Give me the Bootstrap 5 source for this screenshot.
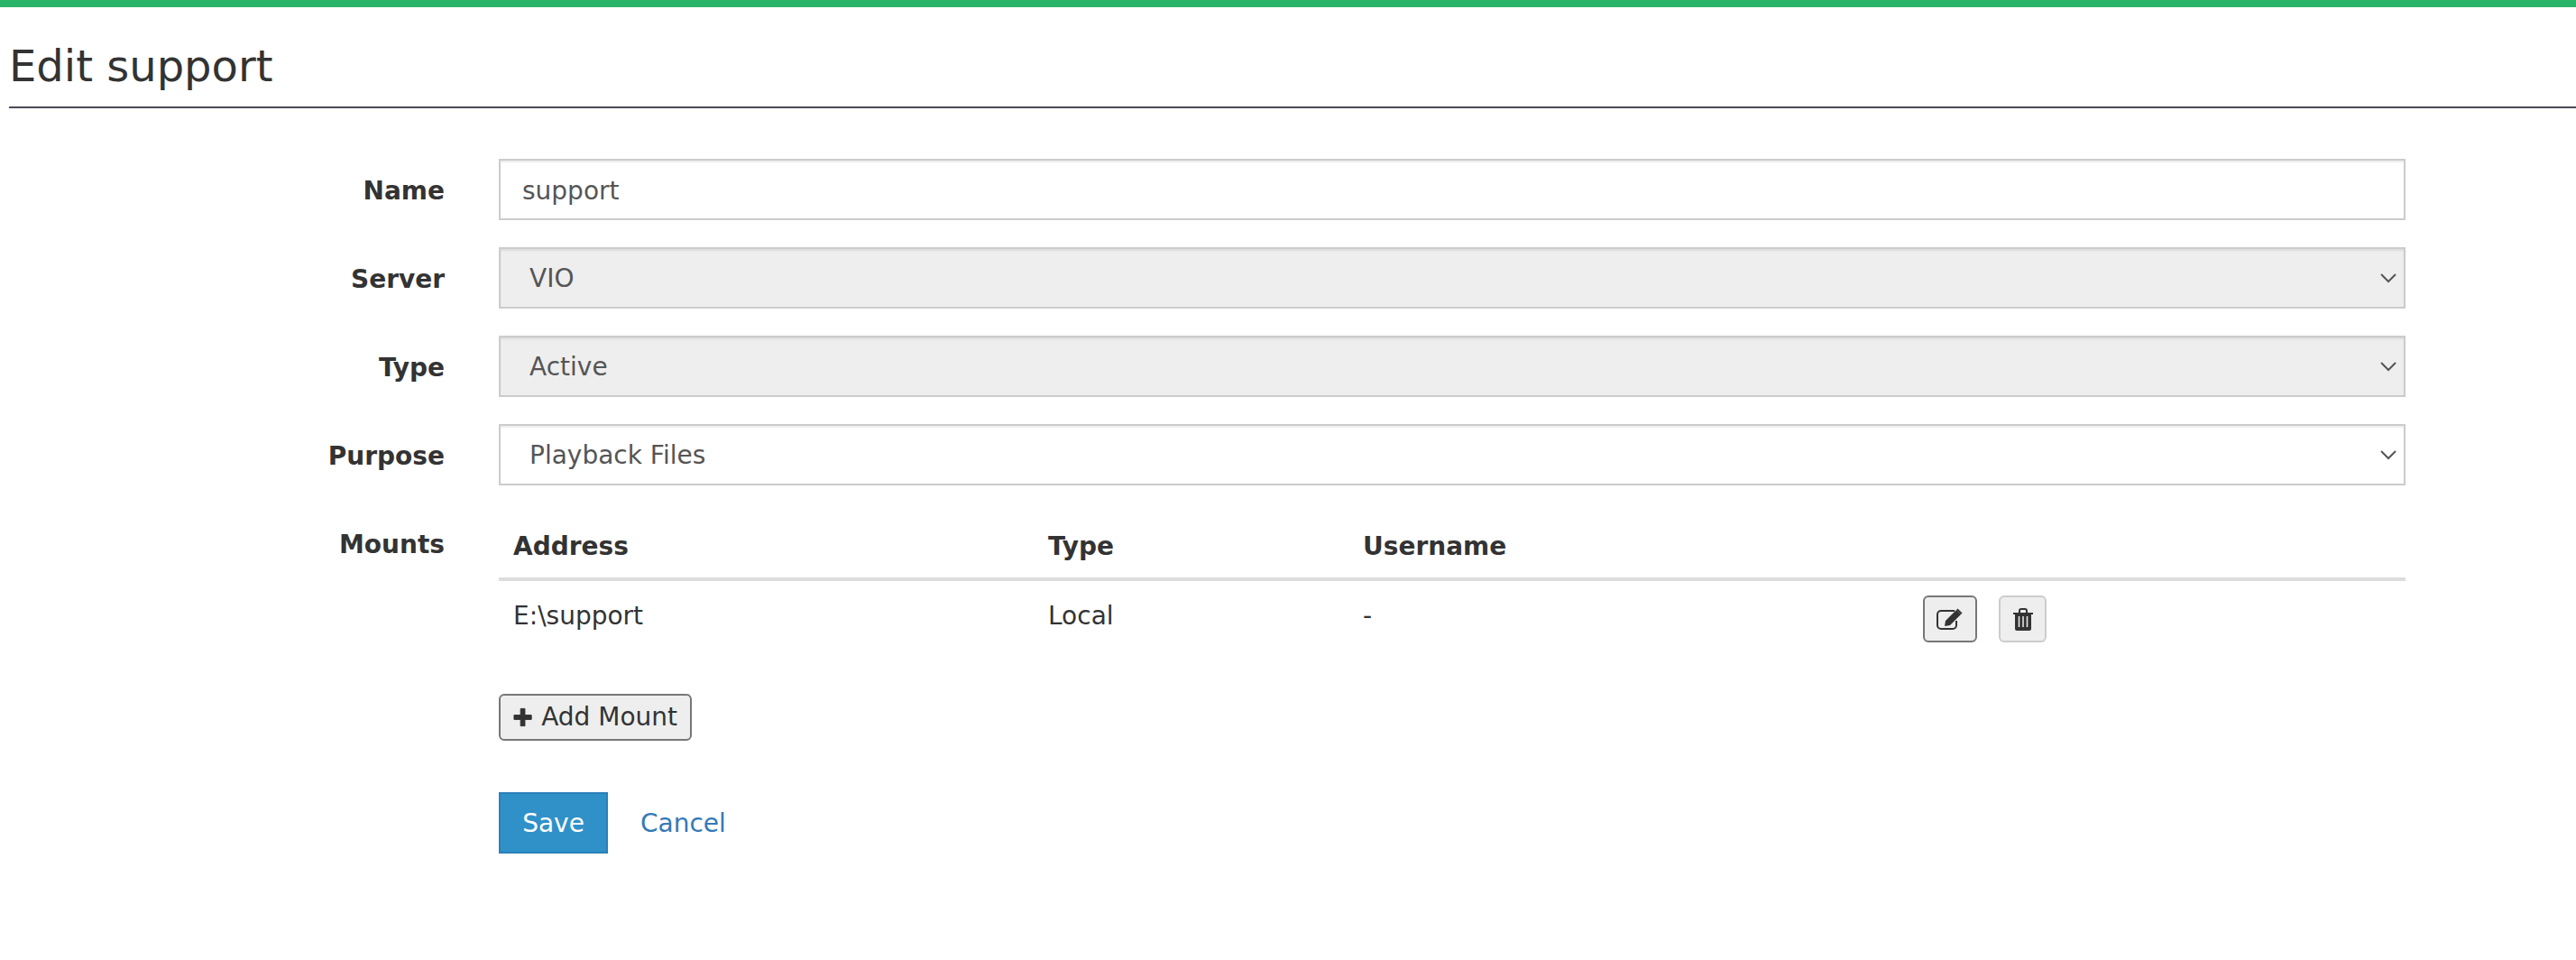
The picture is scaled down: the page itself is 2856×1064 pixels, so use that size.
<!DOCTYPE html>
<html lang="en">
<head>
<meta charset="utf-8">
<title>Edit support</title>
<link rel="stylesheet" href="https://cdn.jsdelivr.net/npm/bootstrap@5.3.0/dist/css/bootstrap.min.css">
<style>
html,body{height:100%}
body{font-family:"DejaVu Sans",Verdana,sans-serif;font-size:28px;line-height:40px;color:#333;background:#fff}
.topbar{height:8px;background:#2ab469}
.page-title{margin:0 0 0 10px;padding:32px 0 0;font-size:48px;line-height:66px;font-weight:400;color:#333;border-bottom:2px solid #4a4a58;height:112px}
.edit-form{padding-top:56px}
.form-line{display:flex;margin-bottom:30px}
.label-col{width:493px;flex:none;text-align:right;font-weight:700;font-size:28px;padding-top:16px;line-height:40px}
.field-col{width:2114px;margin-left:60px;flex:none}
.field{height:68px;border:2px solid #ccc;border-radius:0;box-shadow:inset 0 2px 2px rgba(0,0,0,.075);font-size:28px;color:#555;padding:2px 24px 0;background-color:#fff}
select.field{padding:2px 24px 0 32px;background-position:right 7px center;background-size:20px 12px;background-image:url("data:image/svg+xml,%3csvg xmlns='http://www.w3.org/2000/svg' viewBox='0 0 20 12'%3e%3cpath fill='none' stroke='%23555' stroke-width='2' d='M2 2l8 8 8-8'/%3e%3c/svg%3e")}
.field:disabled{background-color:#eee;color:#555;opacity:1}
.mounts{margin:0 0 41px;--bs-table-bg:transparent}
.mounts th{font-size:28px;font-weight:700;color:#333;padding:18px 16px 14px;line-height:40px;border-bottom:4px solid #ddd}
.mounts td{font-size:28px;color:#333;padding:19px 16px 13px;line-height:40px;border:0}
.mounts td.act-cell{padding:16px}
.act{display:inline-flex;align-items:center;justify-content:center;height:52px;padding:0;border:2px solid #ccc;border-radius:6px;background:#eee;color:#333;vertical-align:top}
.act-edit{width:60px;border-color:#777;margin-right:24px}
.act-del{width:53px}
.add-btn{height:52px;width:214px;padding:0 14px;border:2px solid #777;border-radius:6px;background:#eee;color:#333;font-size:28px;line-height:40px;display:inline-flex;align-items:center;gap:10px;white-space:nowrap}
.save-btn{height:68px;width:121px;border:2px solid #2a80b9;border-radius:0;background:#3091c9;color:#fff;font-size:28px;padding:2px 0 0}
.cancel-link{color:#337ab7;text-decoration:none;margin-left:36px;font-size:28px;padding-top:2px}
.actions{margin-top:57px}
</style>
</head>
<body>
<div class="topbar"></div>
<h2 class="page-title">Edit support</h2>
<form class="edit-form">
  <div class="form-line"><label class="label-col">Name</label><div class="field-col"><input class="form-control field" value="support"></div></div>
  <div class="form-line"><label class="label-col">Server</label><div class="field-col"><select class="form-select field" disabled><option>VIO</option></select></div></div>
  <div class="form-line"><label class="label-col">Type</label><div class="field-col"><select class="form-select field" disabled><option>Active</option></select></div></div>
  <div class="form-line"><label class="label-col">Purpose</label><div class="field-col"><select class="form-select field"><option>Playback Files</option></select></div></div>
  <div class="form-line mb-0"><label class="label-col">Mounts</label>
    <div class="field-col">
      <table class="table mounts">
        <colgroup><col style="width:593px"><col style="width:349px"><col style="width:621px"><col></colgroup>
        <thead><tr><th>Address</th><th>Type</th><th>Username</th><th></th></tr></thead>
        <tbody><tr><td>E:\support</td><td>Local</td><td>-</td><td class="act-cell">
          <button type="button" class="btn act act-edit" aria-label="Edit"><svg width="30" height="24" viewBox="0 0 30 24"><path d="M22 14v5a4 4 0 0 1-4 4H5a4 4 0 0 1-4-4V7a4 4 0 0 1 4-4h15" fill="none" stroke="#333" stroke-width="2"/><path d="M10 14 22 2l5 5-12 12-6 1z" fill="#333"/><path d="M23.500 0.500l5 5-1.500 1.500-5-5z" fill="#333"/></svg></button><button type="button" class="btn act act-del" aria-label="Delete"><svg width="24" height="25" viewBox="0 0 24 25"><path d="M1 5h22v2h-2v16a2 2 0 0 1-2 2H5a2 2 0 0 1-2-2V7H1zM7 5V3a3 3 0 0 1 3-3h4a3 3 0 0 1 3 3v2h-2V3a1 1 0 0 0-1-1h-4a1 1 0 0 0-1 1v2z" fill="#333"/><path d="M7.500 9v12M12 9v12M16.500 9v12" stroke="#eee" stroke-width="1.500"/></svg></button>
        </td></tr></tbody>
      </table>
      <button type="button" class="btn add-btn"><svg width="22" height="22" viewBox="0 0 22 22"><path d="M8.500 1h5v7.500H21v5h-7.500V21h-5v-7.500H1v-5h7.500z" fill="#333" stroke="#333" stroke-linejoin="round"/></svg><span>Add Mount</span></button>
      <div class="actions d-flex align-items-center"><button type="button" class="btn save-btn">Save</button><a href="#" class="cancel-link">Cancel</a></div>
    </div>
  </div>
</form>
<script src="https://cdn.jsdelivr.net/npm/bootstrap@5.3.0/dist/js/bootstrap.bundle.min.js"></script>
</body>
</html>
